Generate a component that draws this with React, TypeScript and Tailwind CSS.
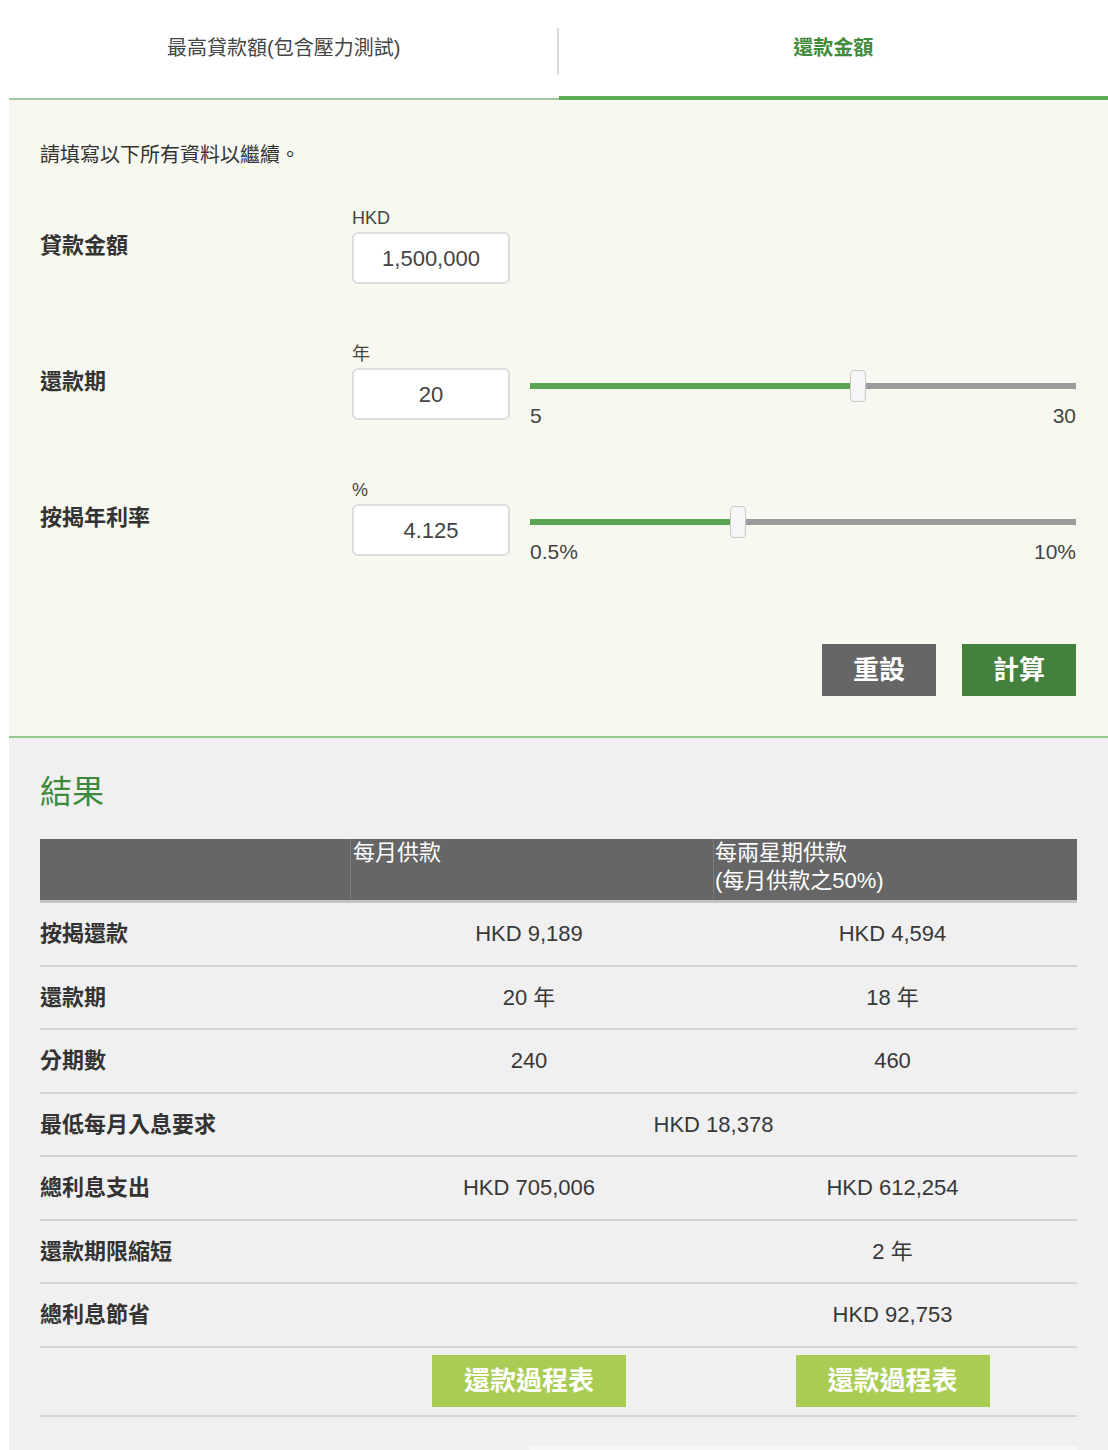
import { memo } from 'react';

/**
 * Mortgage calculator – repayment tab
 */
const FONT = "font-['Liberation_Sans','Noto_Sans_CJK_TC',sans-serif]";

type SliderProps = { value: number; min: number; max: number; minLabel: string; maxLabel: string };

function RangeBar({ value, min, max, minLabel, maxLabel }: SliderProps) {
  const pct = ((value - min) / (max - min)) * 100;
  return (
    <div className="flex-1 ml-[20px] pt-[25px] -mb-[8px]">
      <div className="relative h-[36px]">
        <div className="absolute left-0 right-0 top-[15px] h-[6px] bg-[#9c9c9c]" />
        <div className="absolute left-0 top-[15px] h-[6px] bg-[#5aa552]" style={{ width: `${pct}%` }} />
        <div
          className="absolute top-[2px] w-[16px] h-[32px] rounded-[4px] bg-[#f6f6f6] border border-[#c9c9c9]"
          style={{ left: `calc(${pct}% - 8px)` }}
        />
      </div>
      <div className="flex justify-between text-[21px] leading-[24px] text-[#444]">
        <span>{minLabel}</span>
        <span>{maxLabel}</span>
      </div>
    </div>
  );
}

type FieldProps = { label: string; unit: string; value: string; slider?: SliderProps; className?: string };

function FieldRow({ label, unit, value, slider, className = '' }: FieldProps) {
  return (
    <div className={`flex ${className}`}>
      <div className="w-[312px] flex items-center text-[22px] font-bold text-[#333]">{label}</div>
      <div className="flex flex-1 items-start">
        <div className="flex flex-col">
          <span className="text-[18px] leading-[22px] text-[#444]">{unit}</span>
          <div className="mt-[3px] w-[158px] h-[52px] flex items-center justify-center bg-white border-2 border-[#dcdcdc] rounded-[6px] text-[22px] text-[#444]">
            {value}
          </div>
        </div>
        {slider && <RangeBar {...slider} />}
      </div>
    </div>
  );
}

const ROWS: { label: string; monthly: string; biweekly?: string; span?: boolean }[] = [
  { label: '按揭還款', monthly: 'HKD 9,189', biweekly: 'HKD 4,594' },
  { label: '還款期', monthly: '20 年', biweekly: '18 年' },
  { label: '分期數', monthly: '240', biweekly: '460' },
  { label: '最低每月入息要求', monthly: 'HKD 18,378', span: true },
  { label: '總利息支出', monthly: 'HKD 705,006', biweekly: 'HKD 612,254' },
  { label: '還款期限縮短', monthly: '', biweekly: '2 年' },
  { label: '總利息節省', monthly: '', biweekly: 'HKD 92,753' },
];

function App() {
  return (
    <div className={`${FONT} bg-white min-h-[1450px] pl-[9px] overflow-hidden`}>
      {/* Tabs */}
      <div className="flex h-[100px]">
        <div className="flex-1 flex items-center justify-center border-b-2 border-[#a2c59e] relative">
          <span className="text-[20px] text-[#444] -mt-[2px]">最高貸款額(包含壓力測試)</span>
          <div className="absolute right-0 top-[28px] h-[47px] w-[2px] bg-[#dadada]" />
        </div>
        <div className="flex-1 flex items-center justify-center border-b-4 border-[#5cad55]">
          <span className="text-[20px] font-bold text-[#3f8b3b]">還款金額</span>
        </div>
      </div>

      {/* Input panel */}
      <div className="bg-[#f7f8ef] pl-[31px] pr-[32px] pt-[41px] pb-[40px] border-b-2 border-[#93cb8c]">
        <p className="text-[20px] leading-[28px] text-[#333]">請填寫以下所有資料以繼續。</p>
        <FieldRow className="mt-[38px]" label="貸款金額" unit="HKD" value="1,500,000" />
        <FieldRow
          className="mt-[59px]"
          label="還款期"
          unit="年"
          value="20"
          slider={{ value: 20, min: 5, max: 30, minLabel: '5', maxLabel: '30' }}
        />
        <FieldRow
          className="mt-[59px]"
          label="按揭年利率"
          unit="%"
          value="4.125"
          slider={{ value: 4.125, min: 0.5, max: 10, minLabel: '0.5%', maxLabel: '10%' }}
        />
        <div className="flex justify-end gap-[26px] mt-[88px]">
          <button className="w-[114px] h-[52px] bg-[#666] text-white text-[26px] font-bold">重設</button>
          <button className="w-[114px] h-[52px] bg-[#44813e] text-white text-[26px] font-bold">計算</button>
        </div>
      </div>

      {/* Results */}
      <div className="bg-[#f0f0f0] pl-[31px] pr-[31px] pt-[34px] pb-[40px]">
        <h2 className="text-[32px] leading-[40px] text-[#3c8a3a]">結果</h2>
        <div className="mt-[27px]">
          <div className="grid grid-cols-[310px_363px_1fr] h-[64px] bg-[#666] border-b-[3px] border-[#c4c4c4] text-white text-[22px] leading-[28px]">
            <div />
            <div className="border-l border-[#7d7d7d] pl-[2px]">每月供款</div>
            <div className="border-l border-[#7d7d7d] pl-[1px]">
              每兩星期供款
              <br />
              (每月供款之50%)
            </div>
          </div>
          {ROWS.map((r) => (
            <div
              key={r.label}
              className="grid grid-cols-[310px_363px_1fr] h-[63.5px] items-center border-b-2 border-[#d3d3d3] text-[22px] text-[#383838]"
            >
              <div className="font-bold text-[#333]">{r.label}</div>
              {r.span ? (
                <div className="col-span-2 text-center">{r.monthly}</div>
              ) : (
                <>
                  <div className="text-center pr-[5px]">{r.monthly}</div>
                  <div className="text-center pr-[5px]">{r.biweekly}</div>
                </>
              )}
            </div>
          ))}
          <div className="grid grid-cols-[310px_363px_1fr] h-[69px] items-center border-b-2 border-[#d3d3d3]">
            <div />
            <div className="flex justify-center pr-[5px]">
              <button className="w-[194px] h-[52px] bg-[#a9cd54] text-white text-[26px] font-bold">還款過程表</button>
            </div>
            <div className="flex justify-center pr-[5px]">
              <button className="w-[194px] h-[52px] bg-[#a9cd54] text-white text-[26px] font-bold">還款過程表</button>
            </div>
          </div>
          <div className="mt-[29px] ml-auto w-[548px] h-[20px] bg-[#f7f7f7]" />
        </div>
      </div>
    </div>
  );
}

export default memo(App);
